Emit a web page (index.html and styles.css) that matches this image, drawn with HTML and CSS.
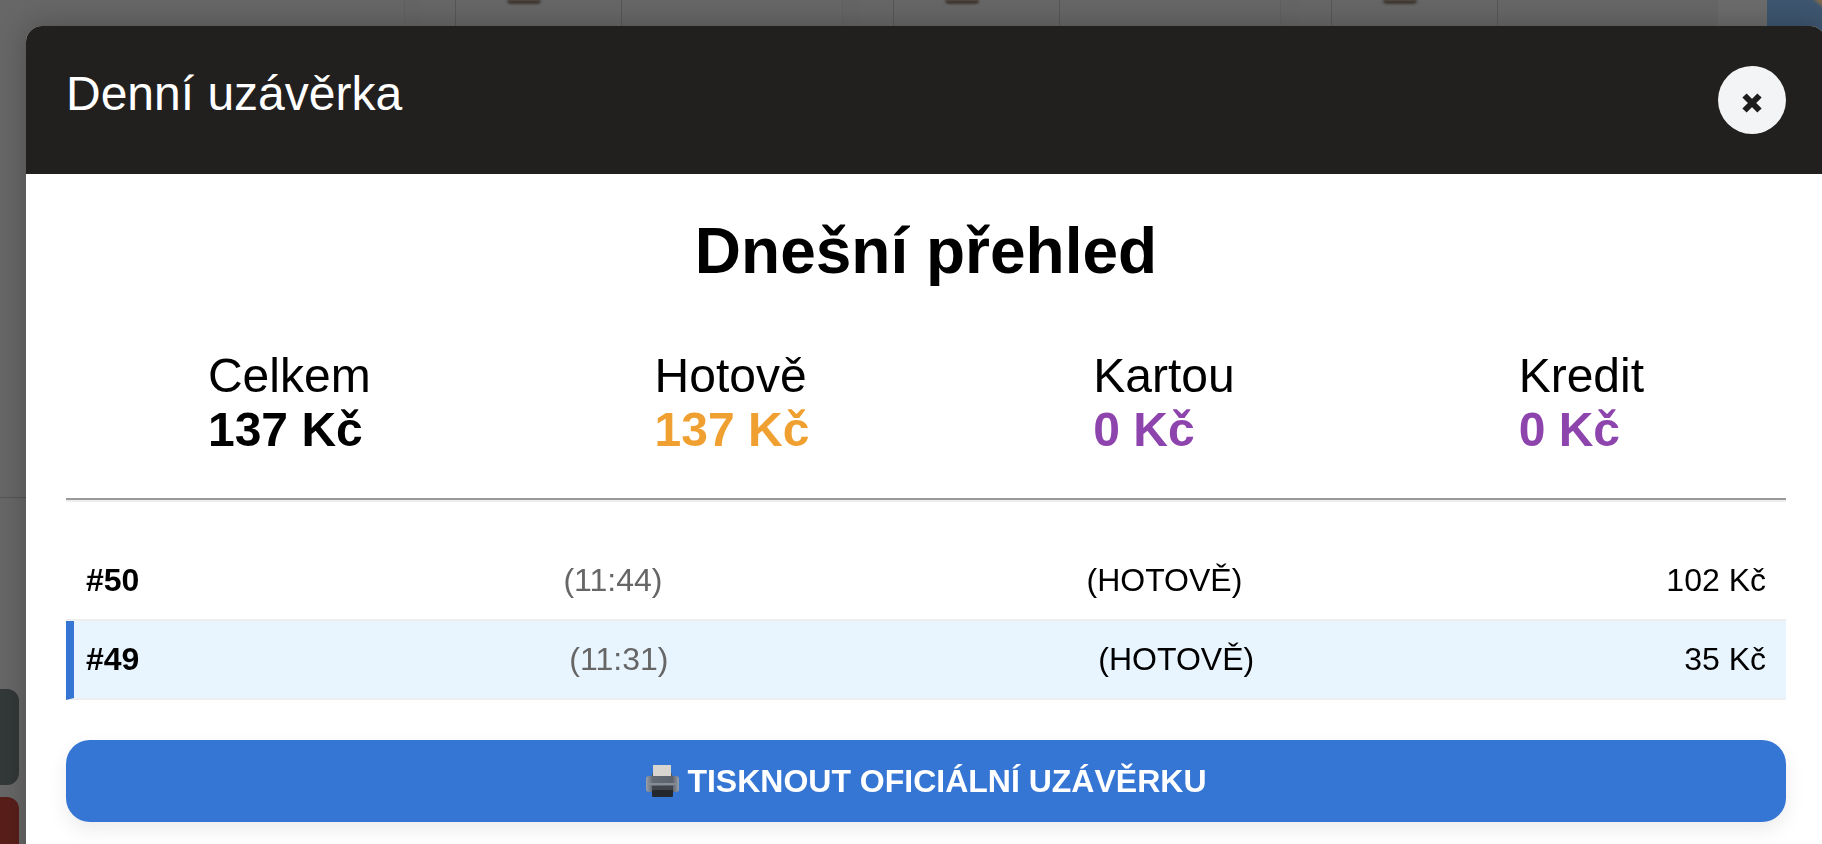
FILE: index.html
```html
<!DOCTYPE html>
<html lang="cs">
<head>
    <meta charset="UTF-8">
    <meta name="viewport" content="width=device-width, initial-scale=1.0">
    <title>Denní uzávěrka</title>
    <link rel="stylesheet" href="styles.css">
</head>
<body>
    <!-- Dimmed page behind the dialog -->
    <div class="app">
        <div class="products">
            <div class="slot"><div class="product"><span class="photo"></span></div></div>
            <div class="slot"><div class="product"><span class="photo"></span></div></div>
            <div class="slot"><div class="product"><span class="photo"></span></div></div>
            <div class="slot-end"></div>
            <div class="blue-panel"></div>
        </div>
        <div class="side-rule"></div>
        <div class="side-btn side-btn-dark"></div>
        <div class="side-btn side-btn-red"></div>
    </div>

    <div class="modal">
        <div class="modal-header">
            <h3 class="modal-title">Denní uzávěrka</h3>
            <button class="close-btn" type="button" aria-label="Zavřít">
                <svg width="24" height="24" viewBox="0 0 24 24">
                    <path d="M4.5 4.5 L19.5 19.5 M19.5 4.5 L4.5 19.5" stroke="#1d1d1d" stroke-width="6" fill="none"/>
                </svg>
            </button>
        </div>
        <div class="modal-body">
            <h2 class="heading">Dnešní přehled</h2>
            <div class="stats">
                <div class="stat">Celkem<br><b>137 Kč</b></div>
                <div class="stat">Hotově<br><b class="cash">137 Kč</b></div>
                <div class="stat">Kartou<br><b class="other">0 Kč</b></div>
                <div class="stat">Kredit<br><b class="other">0 Kč</b></div>
            </div>
            <hr class="divider">
            <div class="orders">
                <div class="order">
                    <b>#50</b>
                    <span class="time">(11:44)</span>
                    <span>(HOTOVĚ)</span>
                    <span>102 Kč</span>
                </div>
                <div class="order order-active">
                    <b>#49</b>
                    <span class="time">(11:31)</span>
                    <span>(HOTOVĚ)</span>
                    <span>35 Kč</span>
                </div>
            </div>
            <button class="print-btn" type="button">
                <svg class="print-icon" width="33" height="34" viewBox="0 0 33 34">
                    <defs>
                        <linearGradient id="printer-body" x1="0" y1="0" x2="1" y2="0">
                            <stop offset="0" stop-color="#9aa0a8"/>
                            <stop offset="0.2" stop-color="#646a74"/>
                            <stop offset="0.8" stop-color="#5c626c"/>
                            <stop offset="1" stop-color="#98a0a8"/>
                        </linearGradient>
                    </defs>
                    <rect x="7" y="1" width="18" height="12" fill="#d8d5d0"/>
                    <path d="M6 9 H7 V12 H25 V9 H26 V14 H6 Z" fill="#4f545c"/>
                    <rect x="0" y="12" width="33" height="16" rx="3" fill="url(#printer-body)"/>
                    <rect x="3" y="19" width="27" height="2" fill="#868c94"/>
                    <rect x="6" y="24" width="21" height="9" rx="1" fill="#24272c"/>
                    <rect x="6" y="22" width="21" height="4" fill="#3f444c"/>
                </svg>
                TISKNOUT OFICIÁLNÍ UZÁVĚRKU
            </button>
        </div>
    </div>
</body>
</html>
```
FILE: styles.css
```css
/* Page behind the dialog */
* {
    box-sizing: border-box;
}
html, body {
    height: 100%;
}
body {
    margin: 0;
    overflow: hidden;
    font-family: "Liberation Sans", Arial, Helvetica, sans-serif;
    background-color: #676767;
    color: #000;
}
.app {
    height: 100%;
}
.products {
    display: flex;
    height: 45px;
    padding-left: 404px;
}
.slot {
    width: 438px;
    padding-left: 50px;
    border-left: 1px solid #606162;
    background: linear-gradient(to right, #666667 17px, #676767 17px);
}
.product {
    width: 167px;
    height: 100%;
    padding-left: 51px;
    border: 1px solid #575757;
    border-top: none;
    border-radius: 0 0 8px 8px;
}
.photo {
    display: block;
    width: 34px;
    height: 4px;
    border-radius: 0 0 17px 17px;
    background-color: #3f362f;
    filter: blur(1px);
}
.slot-end {
    width: 49px;
    background-color: #6c6c6c;
}
.blue-panel {
    flex: 1;
    background: linear-gradient(to bottom left, #7a6a50 4%, #3e5670 10%);
}
.side-rule {
    height: 1px;
    margin-top: 452px;
    background-color: #555;
}
.side-btn {
    width: 19px;
    height: 96px;
    border-radius: 0 12px 12px 0;
}
.side-btn-dark {
    margin-top: 191px;
    background-color: #333838;
}
.side-btn-red {
    margin-top: 12px;
    background-color: #591f1a;
}

/* Dialog */
.modal {
    position: fixed;
    top: 26px;
    left: 26px;
    right: -4px;
    height: 900px;
    background-color: #fff;
    border-radius: 16px 16px 0 0;
    box-shadow: 0 0 30px rgba(0, 0, 0, 0.25);
}
.modal-header {
    display: flex;
    justify-content: space-between;
    padding: 40px;
    background-color: #22201f;
    border-radius: 16px 16px 0 0;
}
.modal-title {
    margin: 0;
    font-size: 48px;
    font-weight: normal;
    color: #fff;
}
.close-btn {
    display: flex;
    align-items: center;
    justify-content: center;
    width: 68px;
    height: 68px;
    padding: 6px 0 0;
    border: none;
    border-radius: 50%;
    background-color: #f3f4f6;
}
.modal-body {
    padding: 40px;
}
.heading {
    margin: 0 0 61px;
    font-size: 64px;
    line-height: 74px;
    text-align: center;
}
.stats {
    display: flex;
    justify-content: space-around;
    padding-bottom: 41px;
    font-size: 48px;
    line-height: 54px;
}
.cash {
    color: #efa030;
}
.other {
    color: #8e44ad;
}
.divider {
    margin: 0 0 40px;
    height: 4px;
    border: none;
    border-top: 2px solid #999;
    border-bottom: 2px solid #eee;
}
.order {
    display: flex;
    justify-content: space-between;
    padding: 20px;
    font-size: 32px;
    border-bottom: 2px solid #eee;
}
.order-active {
    padding-left: 12px;
    border-left: 8px solid #3575d3;
    background-color: #e8f5ff;
}
.time {
    color: #666;
}
.print-btn {
    display: block;
    width: 100%;
    height: 82px;
    margin-top: 40px;
    border: none;
    border-radius: 24px;
    background-color: #3575d3;
    color: #fff;
    font-family: inherit;
    font-size: 32px;
    font-weight: bold;
    box-shadow: 0 8px 20px rgba(0, 0, 0, 0.08);
}
.print-icon {
    vertical-align: -6px;
}
```
